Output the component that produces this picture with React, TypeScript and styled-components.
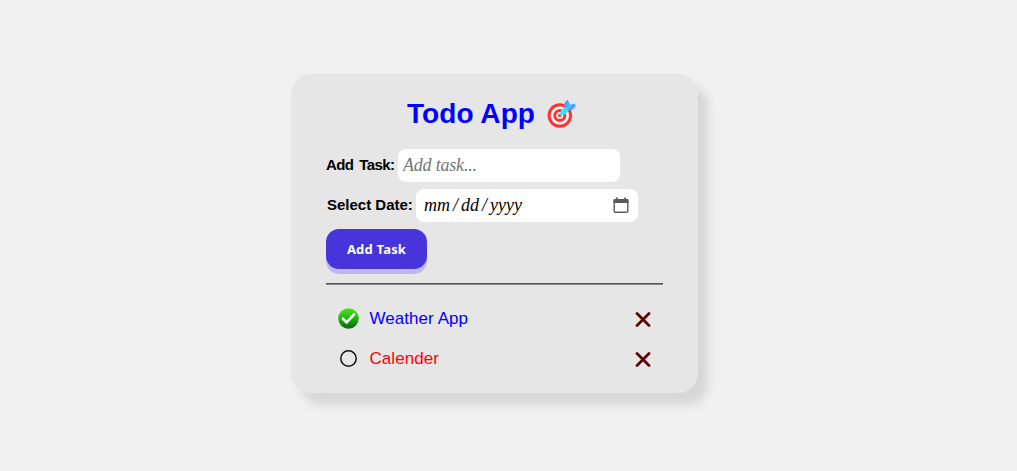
import React from 'react';
import styled, { createGlobalStyle } from 'styled-components';

const GlobalStyle = createGlobalStyle`
  * { box-sizing: border-box; }
  body {
    margin: 0;
    background: #f0f0f0;
    font-family: "Liberation Sans", Arial, sans-serif;
  }
`;

const Page = styled.main`
  min-height: 471px;
  padding: 74px 28px 0 0;
  display: flex;
  justify-content: center;
  align-items: flex-start;
`;

const Card = styled.section`
  width: 407px;
  height: 319px;
  padding: 23px 35px 0;
  border-radius: 20px;
  background: #e6e6e6;
  box-shadow: 10px 12px 8px #d7d7d7;
`;

const Title = styled.h1`
  margin: 0 0 19px;
  padding-right: 5px;
  height: 33px;
  display: flex;
  justify-content: center;
  align-items: center;
  gap: 12px;
  color: #0000ff;
  font-size: 28px;
  letter-spacing: 0.05px;
  line-height: 33px;
  white-space: nowrap;

  svg { margin-bottom: 2px; }
`;

const Field = styled.div<{ $indent?: number }>`
  display: flex;
  align-items: center;
  gap: 4px;
  height: 33px;
  margin-bottom: 7px;
  padding-left: ${({ $indent = 0 }) => $indent}px;
`;

const Label = styled.label<{ $width: number; $tracking?: number }>`
  width: ${({ $width }) => $width}px;
  padding-bottom: 2px;
  font-size: 15px;
  font-weight: 700;
  letter-spacing: ${({ $tracking = 0 }) => $tracking}px;
  word-spacing: ${({ $tracking = 0 }) => -4 * $tracking}px;
  line-height: 18px;
  white-space: nowrap;
  color: #000;
`;

const TextInput = styled.input`
  width: 222px;
  height: 33px;
  padding: 0 5px;
  border: 0;
  border-radius: 8px;
  background: #fff;
  font: italic 18px "Liberation Serif", serif;
  letter-spacing: -0.2px;

  &::placeholder { color: #757575; opacity: 1; }
`;

const DateInput = styled.div`
  width: 222px;
  height: 33px;
  padding: 0 9px 0 8px;
  display: flex;
  align-items: center;
  justify-content: space-between;
  border-radius: 8px;
  background: #fff;
  font: italic 18px "Liberation Serif", serif;

  svg { margin-bottom: 2px; }
`;

const DateParts = styled.span`
  display: flex;
  gap: 3px;
`;

const AddButton = styled.button`
  display: block;
  width: 101px;
  height: 40px;
  padding: 0;
  border: 0;
  border-radius: 13px;
  background: #4834db;
  box-shadow: 0 5px 0 #bfb8ec;
  color: #fff;
  font: 700 13px "Noto Sans", sans-serif;
  letter-spacing: 0.2px;
`;

const Divider = styled.hr`
  height: 2px;
  margin: 14px 0 14px;
  border: 0;
  border-top: 1px solid #555;
  background: #858585;
`;

const TaskList = styled.ul`
  margin: 0;
  padding: 0;
  list-style: none;
`;

const TaskRow = styled.li<{ $done: boolean }>`
  height: 40px;
  padding: 0 12px 0 11px;
  display: flex;
  align-items: center;
  color: ${({ $done }) => ($done ? '#0000ff' : '#ff0000')};
  font-size: 17px;
  letter-spacing: 0.05px;
`;

const TaskName = styled.span`
  flex: 1;
  margin-left: 9.5px;
  line-height: 20px;
`;

const Target = () => (
  <svg width="30" height="30" viewBox="0 0 30 30">
    <circle cx="12.8" cy="17.500" r="12.200" fill="#ff3232" />
    <circle cx="12.8" cy="17.500" r="9.300" fill="#f3f3f3" />
    <circle cx="12.8" cy="17.500" r="6.500" fill="#ff3232" />
    <circle cx="12.8" cy="17.500" r="3.600" fill="#f3f3f3" />
    <circle cx="12.8" cy="17.500" r="1.700" fill="#ff3232" />
    <path d="m12.500 17.500 1.500-5.500 6-4 3 3-4.500 5Z" fill="#40dfff" />
    <path d="M17.500 9.500 17.500 4.800 20.500 1.500 23 6.800 28 5.800 28.700 8.500 24.500 12.500 20.500 11.500Z" fill="#4aa3ff" />
    <path d="m18 12 6-5" stroke="#45d3fc" strokeWidth="1.700" />
  </svg>
);

const CalendarIcon = () => (
  <svg width="16" height="16" viewBox="0 0 16 16">
    <rect x="1.200" y="2.700" width="13.600" height="12.600" rx="1.200" fill="none" stroke="#5a5a5a" strokeWidth="1.400" />
    <path d="M1.500 2h13a1 1 0 0 1 1 1v3H.500V3a1 1 0 0 1 1-1ZM3 .500h1.700V3H3ZM11.300.500H13V3h-1.700Z" fill="#5a5a5a" />
  </svg>
);

const StatusIcon = ({ done }: { done: boolean }) => (
  <svg width="23" height="23" viewBox="0 0 23 23">
    {done ? (
      <>
        <defs>
          <linearGradient id="done" x1="0" y1="0" x2="0" y2="1">
            <stop offset="0" stopColor="#48e814" />
            <stop offset=".5" stopColor="#1eb50c" />
            <stop offset="1" stopColor="#07680b" />
          </linearGradient>
        </defs>
        <circle cx="11.500" cy="10.500" r="10.300" fill="url(#done)" />
        <path d="m6 10.800 3.600 3.600 7.500-8.100" fill="none" stroke="#fff" strokeWidth="2.700" strokeLinecap="round" />
      </>
    ) : (
      <circle cx="11.500" cy="10.500" r="7.700" fill="none" stroke="#111" strokeWidth="1.500" />
    )}
  </svg>
);

const RemoveIcon = () => (
  <svg width="16" height="16" viewBox="0 0 16 16">
    <path d="m2 2.500 12 12M14 2.500l-12 12" stroke="#5c0505" strokeWidth="2.800" strokeLinecap="round" />
  </svg>
);

const tasks = [
  { name: 'Weather App', done: true },
  { name: 'Calender', done: false },
];

export default function App() {
  return (
    <Page>
      <GlobalStyle />
      <Card>
        <Title>Todo App<Target /></Title>
        <Field>
          <Label htmlFor="task" $width={68} $tracking={-0.6}>Add Task:</Label>
          <TextInput id="task" placeholder="Add task..." />
        </Field>
        <Field $indent={1}>
          <Label $width={85}>Select Date:</Label>
          <DateInput>
            <DateParts><span>mm</span><span>/</span><span>dd</span><span>/</span><span>yyyy</span></DateParts>
            <CalendarIcon />
          </DateInput>
        </Field>
        <AddButton type="button">Add Task</AddButton>
        <Divider />
        <TaskList>
          {tasks.map(({ name, done }) => (
            <TaskRow key={name} $done={done}>
              <StatusIcon done={done} />
              <TaskName>{name}</TaskName>
              <RemoveIcon />
            </TaskRow>
          ))}
        </TaskList>
      </Card>
    </Page>
  );
}
